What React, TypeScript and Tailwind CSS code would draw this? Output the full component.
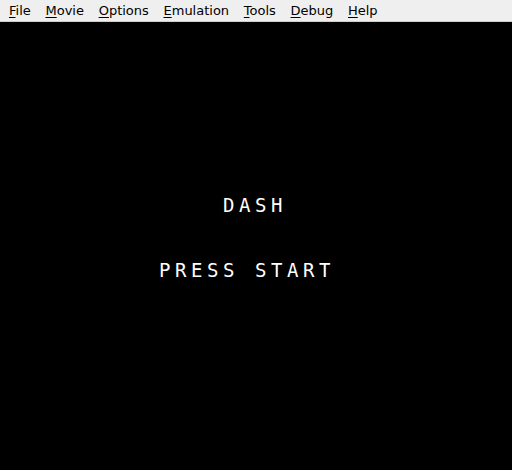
const menus = ['File', 'Movie', 'Options', 'Emulation', 'Tools', 'Debug', 'Help'];

function MenuBar() {
  return (
    <div className="flex h-[22px] items-start gap-[0.7px] border-b border-[#cdcdcd] bg-[#efefef] pl-[2px] font-['DejaVu_Sans',sans-serif] text-[13px] leading-[21px] text-black">
      {menus.map((m) => (
        <span key={m} className="px-[7px]">
          <span className="underline decoration-1 underline-offset-2">{m[0]}</span>
          {m.slice(1)}
        </span>
      ))}
    </div>
  );
}

export default function App() {
  return (
    <div className="flex h-[470px] w-[512px] flex-col overflow-hidden bg-black">
      <MenuBar />
      <div className="flex flex-1 flex-col bg-black font-['DejaVu_Sans_Mono',monospace] text-[19px] leading-[14px] tracking-[4.55px] text-white">
        <div className="mt-[176px] pl-[223px]">DASH</div>
        <div className="mt-[51px] pl-[159px]">PRESS START</div>
      </div>
    </div>
  );
}
